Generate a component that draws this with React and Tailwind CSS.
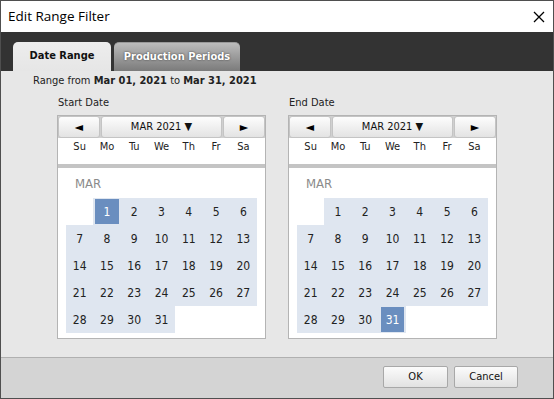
import React from "react";

const days = ["Su", "Mo", "Tu", "We", "Th", "Fr", "Sa"];

function Calendar({ selected }) {
  const cells = [null];
  for (let d = 1; d <= 31; d++) cells.push(d);
  while (cells.length < 35) cells.push(null);
  return (
    <div className="w-[209px] h-[224px] border border-[#b4b4b4] bg-white flex flex-col">
      <div className="h-[22px] flex gap-px bg-[#d0d0d0]">
        <div className="w-[42px] rounded-[3px] border border-[#c4c4c4] bg-gradient-to-b from-[#fdfdfd] to-[#e3e3e3] flex items-center justify-center text-[12px] text-black">◄</div>
        <div className="flex-1 rounded-[3px] border border-[#c4c4c4] bg-gradient-to-b from-[#fdfdfd] to-[#e3e3e3] flex items-center justify-center text-[11px] text-[#111]">MAR 2021 ▼</div>
        <div className="w-[42px] rounded-[3px] border border-[#c4c4c4] bg-gradient-to-b from-[#fdfdfd] to-[#e3e3e3] flex items-center justify-center text-[12px] text-black">►</div>
      </div>
      <div className="w-[191px] mx-auto grid grid-cols-7 h-[19px] items-center text-[11px] text-[#222]">
        {days.map((d) => (
          <div key={d} className="text-center">{d}</div>
        ))}
      </div>
      <div className="h-[7px]" />
      <div className="h-[4px] bg-[#c4c4c4]" />
      <div className="h-[30px] flex items-center pl-[17px] pt-[2px] text-[13px] text-[#8a8a8a]">MAR</div>
      <div className="w-[191px] mx-auto grid grid-cols-7">
        {cells.map((d, i) =>
          d === null ? (
            <div key={i} className="h-[27px]" />
          ) : (
            <div key={i} className="h-[27px] bg-[#dfe6f0] p-[1px] px-[2px]">
              <div
                className={
                  "h-full flex items-center justify-center text-[12px] " +
                  (d === selected ? "bg-[#6a8ebf] text-white" : "text-[#222]")
                }
              >
                {d}
              </div>
            </div>
          )
        )}
      </div>
    </div>
  );
}

export default function App() {
  return (
    <div
      className="w-[554px] h-[399px] border border-[#4f4f4f] flex flex-col bg-white overflow-hidden"
      style={{ fontFamily: '"DejaVu Sans Condensed", "DejaVu Sans", sans-serif' }}
    >
      <div className="h-[31px] flex items-center justify-between pl-[7px] pr-[8px] bg-white">
        <span className="text-[13.5px] text-black" style={{ fontFamily: '"Open Sans", sans-serif' }}>
          Edit Range Filter
        </span>
        <svg width="12" height="12" viewBox="0 0 12 12">
          <path d="M1 1 L11 11 M11 1 L1 11" stroke="#000" strokeWidth="1.3" />
        </svg>
      </div>
      <div className="h-[39px] bg-[#333333] flex items-end pl-[12px] gap-[3px]">
        <div className="w-[98px] h-[29px] rounded-t-[5px] bg-gradient-to-b from-[#ededed] to-[#e6e6e6] flex items-center justify-center text-[11px] font-bold text-[#111]">
          Date Range
        </div>
        <div
          className="w-[126px] h-[29px] rounded-t-[5px] bg-gradient-to-b from-[#bcbcbc] to-[#7b7b7b] border-t border-[#999] flex items-center justify-center text-[11px] font-bold text-white"
          style={{ textShadow: "0 0 2px #333" }}
        >
          Production Periods
        </div>
      </div>
      <div className="h-[286px] bg-[#e7e7e7] flex flex-col">
        <div className="pl-[32px] pt-[2px] h-[18px] text-[11px] text-[#222] flex items-center">
          <span>Range from&nbsp;</span>
          <span className="font-bold">Mar 01, 2021</span>
          <span>&nbsp;to&nbsp;</span>
          <span className="font-bold">Mar 31, 2021</span>
        </div>
        <div className="flex gap-[22px] pl-[56px] pt-[2px]">
          <div className="flex flex-col">
            <div className="h-[24px] pl-[1px] flex items-center text-[11px] text-[#222]">Start Date</div>
            <Calendar selected={1} />
          </div>
          <div className="flex flex-col">
            <div className="h-[24px] pl-[1px] flex items-center text-[11px] text-[#222]">End Date</div>
            <Calendar selected={31} />
          </div>
        </div>
      </div>
      <div className="flex-1 border-t border-[#b0b0b0] bg-[#d4d4d4] flex justify-end items-start pt-[8px] pr-[35px] gap-[6px]">
        <div className="w-[65px] h-[22px] rounded-[2px] border border-[#a8a8a8] bg-gradient-to-b from-[#fbfbfb] to-[#e2e2e2] flex items-center justify-center text-[11px] text-[#111]">
          OK
        </div>
        <div className="w-[64px] h-[22px] rounded-[2px] border border-[#a8a8a8] bg-gradient-to-b from-[#fbfbfb] to-[#e2e2e2] flex items-center justify-center text-[11px] text-[#111]">
          Cancel
        </div>
      </div>
    </div>
  );
}
